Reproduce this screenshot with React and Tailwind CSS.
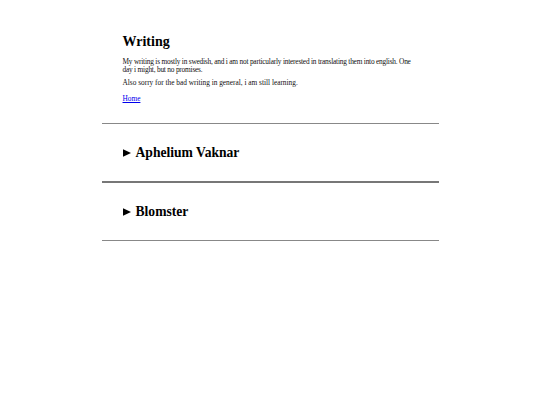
export default function App() {
  const Tri = () => (
    <svg width="8" height="8" viewBox="0 0 8 8" className="shrink-0">
      <polygon points="0,0.25 8,4 0,7.75" fill="#000" />
    </svg>
  );
  return (
    <div className="min-h-[405px] bg-white text-black" style={{ fontFamily: '"Liberation Serif", "Times New Roman", serif' }}>
      <div className="w-[337px] mx-auto pt-[34px]">
        <div className="px-[21px]">
          <h1 className="text-[14px] leading-[16px] font-bold">Writing</h1>
          <p className="mt-[8px] text-[7.33px] leading-[8px] text-[#111] tracking-[-0.2px]">
            <span className="whitespace-nowrap">My writing is mostly in swedish, and i am not particularly interested in translating them into english. One</span>
            <br />
            day i might, but no promises.
          </p>
          <p className="mt-[5px] text-[7.33px] leading-[8px] text-[#111]">Also sorry for the bad writing in general, i am still learning.</p>
          <a href="#" className="block mt-[8px] text-[7.33px] leading-[8px] text-[#0000ee] underline w-fit">Home</a>
        </div>
        <div className="mt-[20px] border-t border-[#888]" />
        <div className="h-[57px] px-[21px] flex items-center gap-[5px]">
          <Tri />
          <h2 className="text-[13.6px] leading-[16px] font-bold">Aphelium Vaknar</h2>
        </div>
        <div className="border-t-2 border-[#777]" />
        <div className="h-[57px] px-[21px] flex items-center gap-[5px]">
          <Tri />
          <h2 className="text-[13.6px] leading-[16px] font-bold">Blomster</h2>
        </div>
        <div className="border-t border-[#888]" />
      </div>
    </div>
  );
}
